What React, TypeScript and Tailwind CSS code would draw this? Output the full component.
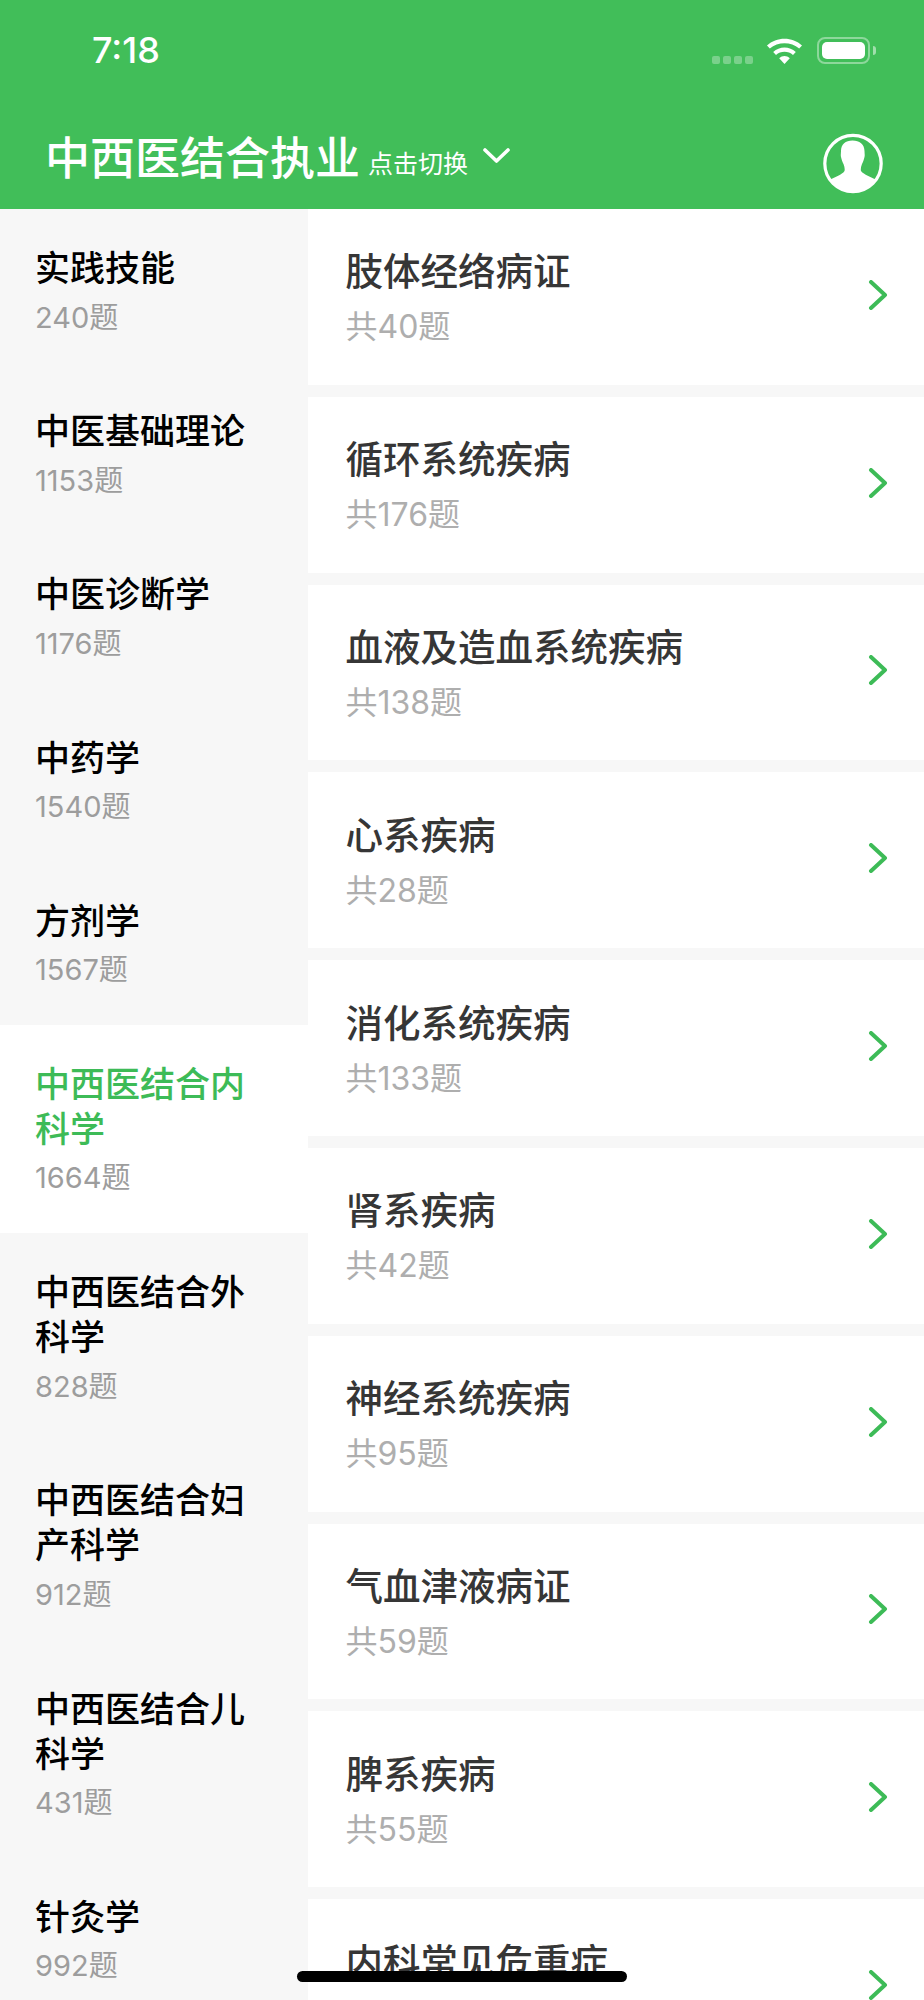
const subjects = [
  { name: "实践技能", count: 240 },
  { name: "中医基础理论", count: 1153 },
  { name: "中医诊断学", count: 1176 },
  { name: "中药学", count: 1540 },
  { name: "方剂学", count: 1567 },
  { name: "中西医结合内科学", count: 1664, active: true },
  { name: "中西医结合外科学", count: 828 },
  { name: "中西医结合妇产科学", count: 912 },
  { name: "中西医结合儿科学", count: 431 },
  { name: "针灸学", count: 992 },
];

// last card's count is below the fold in the screenshot
const chapters: { name: string; count?: number }[] = [
  { name: "肢体经络病证", count: 40 },
  { name: "循环系统疾病", count: 176 },
  { name: "血液及造血系统疾病", count: 138 },
  { name: "心系疾病", count: 28 },
  { name: "消化系统疾病", count: 133 },
  { name: "肾系疾病", count: 42 },
  { name: "神经系统疾病", count: 95 },
  { name: "气血津液病证", count: 59 },
  { name: "脾系疾病", count: 55 },
  { name: "内科常见危重症" },
];

const StatusIcons = () => (
  <div className="flex items-center">
    <div className="flex gap-[3px] mt-[20px] mr-[13px]">
      {[0, 1, 2, 3].map((i) => (
        <span key={i} className="w-[8px] h-[8px] rounded-[2px] bg-white/30" />
      ))}
    </div>
    <svg width="37" height="27" viewBox="0 0 37 27" className="mr-[14px]">
      <path d="M1 8.5C10.5 -0.5 26.5 -0.5 36 8.5L33.2 11.6C25 4.4 12 4.4 3.8 11.6Z" fill="white" />
      <path d="M7.2 15C13.5 9 23.5 9 29.8 15L27 18C22.4 13.8 14.6 13.8 10 18Z" fill="white" />
      <path d="M13.2 21.2C16.4 18.4 20.6 18.4 23.8 21.2L18.5 27Z" fill="white" />
    </svg>
    <div className="w-[53px] h-[27px] rounded-[8px] border-2 border-white/40 p-[3px]">
      <div className="w-full h-full rounded-[5px] bg-white" />
    </div>
    <span className="w-[3px] h-[9px] ml-[3px] rounded-r-[3px] bg-white/50" />
  </div>
);

const Avatar = () => (
  <svg width="60" height="61" viewBox="0 0 60 61">
    <defs>
      <clipPath id="avatar-clip">
        <circle cx="30" cy="30.5" r="27.5" />
      </clipPath>
    </defs>
    <circle cx="30" cy="30.5" r="28.2" fill="none" stroke="white" strokeWidth="3.2" />
    <path
      clipPath="url(#avatar-clip)"
      d="M29.5 7.5C22.5 7.5 18 11.5 18 18C18 20.5 17.5 22 18 24C18.5 26.5 19.5 29 20.5 31C21.5 33.5 22 36 21.5 38C19 42 12 43.5 7 47L7 61L53 61L53 47C48 43.5 41 42 38 38C37.5 36 38 33.5 39 31C40 29 41 26.5 41.5 24C42 22 41.5 20.5 41.5 18C41.5 11.5 36.5 7.5 29.5 7.5Z"
      fill="white"
    />
  </svg>
);

const SubjectItem = ({ name, count, active }: { name: string; count: number; active?: boolean }) => (
  <div className={`pl-[35px] pr-[54px] pt-[37px] pb-[34.7px] ${active ? "bg-white" : ""}`}>
    <p className={`text-[35px] leading-[45px] font-medium ${active ? "text-[#3dbb57]" : "text-black"}`}>{name}</p>
    <p className="mt-[6.5px] text-[29px] leading-[40px] text-[#9d9d9d]">{count}题</p>
  </div>
);

const ChapterCard = ({ name, count }: { name: string; count?: number }) => (
  <div className="flex items-center justify-between h-[175.8px] shrink-0 bg-white pl-[37.5px] pr-[36px]">
    <div className="mt-[2px]">
      <p className="text-[37.5px] leading-[50px] font-medium text-[#363636]">{name}</p>
      <p className="mt-[9px] h-[42px] text-[32px] leading-[42px] text-[#aeaeae]">
        {count !== undefined && `共${count}题`}
      </p>
    </div>
    <svg width="20" height="30" viewBox="0 0 20 30" className="mt-[-4px]">
      <path d="M3 2L17 15L3 28" fill="none" stroke="#3dbb57" strokeWidth="4" strokeLinecap="round" strokeLinejoin="round" />
    </svg>
  </div>
);

export default function App() {
  return (
    <div className="relative h-[2000px] overflow-hidden flex flex-col bg-[#f7f7f7] font-['Inter','Noto_Sans_CJK_SC',sans-serif]">
      <header className="h-[209px] shrink-0 bg-[#41be59] text-white">
        <div className="h-[100px] flex items-center justify-between pl-[92px] pr-[48px]">
          <span className="text-[36px] font-medium">7:18</span>
          <StatusIcons />
        </div>
        <div className="h-[109px] pt-[18px] flex items-center justify-between pl-[45px] pr-[41px]">
          <div className="flex items-center mt-[-10px]">
            <span className="text-[45px] leading-[56px] font-medium">中西医结合执业</span>
            <span className="text-[25px] leading-[34px] ml-[8px] mt-[10px]">点击切换</span>
            <svg width="27" height="15" viewBox="0 0 27 15" className="ml-[15px] mt-[-6px]">
              <path d="M2 2L13.5 13L25 2" fill="none" stroke="white" strokeWidth="3.6" strokeLinecap="round" strokeLinejoin="round" />
            </svg>
          </div>
          <Avatar />
        </div>
      </header>

      <div className="flex flex-1 min-h-0">
        <aside className="w-[308px] shrink-0">
          {subjects.map((s) => (
            <SubjectItem key={s.name} name={s.name} count={s.count} active={s.active} />
          ))}
        </aside>
        <main className="flex-1 flex flex-col gap-[12px]">
          {chapters.map((c) => (
            <ChapterCard key={c.name} name={c.name} count={c.count} />
          ))}
        </main>
      </div>

      <div className="absolute left-[297px] top-[1971px] w-[330px] h-[11px] rounded-full bg-black" />
    </div>
  );
}
